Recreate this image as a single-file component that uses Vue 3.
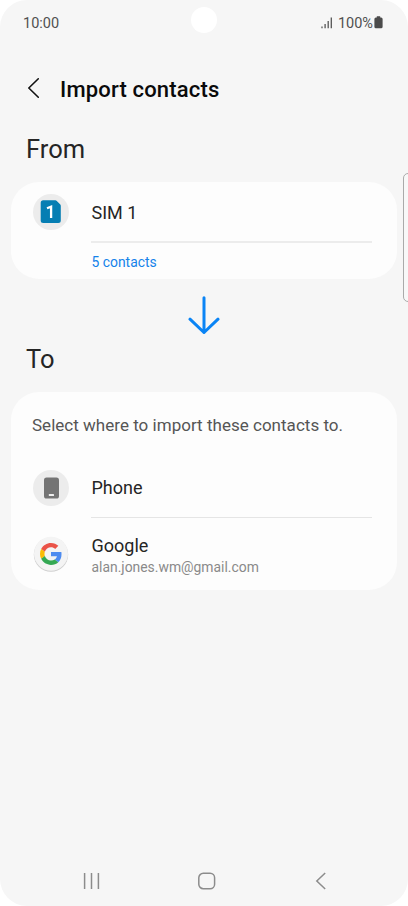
<script setup>
</script>

<template>
  <main class="screen">
    <header class="status">
      <span class="clock">10:00</span>
      <span class="camera"></span>
      <div class="indicators">
        <svg class="signal" width="12" height="12" viewBox="0 0 12 12">
          <path d="M1 9.500V11.200M4.100 7V11.200M7.200 4V11.200M10.300 .6V11.200" />
        </svg>
        <span class="percent">100%</span>
        <svg class="battery" width="9" height="13" viewBox="0 0 9 13">
          <path d="M2.800 .2h3.400v1.200h.9A1.500 1.500 0 0 1 8.600 2.900v7.800a1.500 1.500 0 0 1-1.500 1.500H1.900a1.500 1.500 0 0 1-1.500-1.500V2.900a1.500 1.500 0 0 1 1.500-1.500h.9z" />
        </svg>
      </div>
    </header>

    <div class="titlebar">
      <svg class="back" width="14" height="22" viewBox="0 0 14 22">
        <path d="M11.300 1.800 1.800 11l9.500 9.200" />
      </svg>
      <h1>Import contacts</h1>
    </div>

    <h2 class="from">From</h2>
    <section class="card source">
      <div class="row sim">
        <svg class="icon" width="36" height="36" viewBox="0 0 36 36">
          <circle cx="18" cy="18" r="18" fill="#ececec" />
          <path d="M10.200 6.300h12.300a1.500 1.500 0 0 1 1 .4l3.600 3.500a2.300 2.300 0 0 1 .7 1.600v14.700a2.500 2.500 0 0 1-2.500 2.500H10.200a2.500 2.500 0 0 1-2.500-2.500V8.800a2.500 2.500 0 0 1 2.500-2.500z" fill="#067eb3" />
          <path d="M14 14.300l4.100-1.600v11.200" fill="none" stroke="#fff" stroke-width="2.300" />
        </svg>
        <span class="name">SIM 1</span>
      </div>
      <div class="line"></div>
      <div class="count">5 contacts</div>
    </section>

    <svg class="arrow" width="32" height="39" viewBox="0 0 32 39">
      <path d="M16 1.800V36.500M2 23.200l14 13.300 14-13.300" />
    </svg>

    <h2 class="to">To</h2>
    <section class="card target">
      <p class="hint">Select where to import these contacts to.</p>
      <div class="row phone">
        <svg class="icon" width="36" height="36" viewBox="0 0 36 36">
          <circle cx="18" cy="18" r="18" fill="#ececec" />
          <rect x="11" y="7.600" width="15" height="21" rx="2.600" fill="#747474" />
          <rect x="15.800" y="24" width="5.200" height="2" rx=".5" fill="#eee" />
        </svg>
        <span class="name">Phone</span>
      </div>
      <div class="line"></div>
      <div class="row google">
        <svg class="icon" width="36" height="36" viewBox="0 0 36 36">
          <circle cx="18" cy="18.600" r="17.200" fill="#cfcfcf" />
          <circle cx="18" cy="17.800" r="17" fill="#f4f4f4" />
          <g transform="translate(7 6.900) scale(.458)">
            <path fill="#ea5348" d="M24 9.500c3.540 0 6.710 1.220 9.210 3.600l6.850-6.850C35.900 2.380 30.470 0 24 0 14.620 0 6.510 5.380 2.560 13.220l7.980 6.190C12.430 13.720 17.740 9.500 24 9.500z" />
            <path fill="#4e8cf0" d="M46.980 24.550c0-1.570-.150-3.090-.380-4.550H24v9.020h12.940c-.580 2.960-2.260 5.480-4.780 7.180l7.730 6c4.510-4.180 7.090-10.360 7.090-17.650z" />
            <path fill="#fbbc05" d="M10.530 28.590c-.480-1.450-.760-2.990-.760-4.590s.270-3.140.760-4.590l-7.980-6.190C.920 16.460 0 20.120 0 24c0 3.880.920 7.540 2.560 10.780l7.970-6.190z" />
            <path fill="#34a853" d="M24 48c6.480 0 11.930-2.130 15.890-5.810l-7.730-6c-2.150 1.450-4.920 2.300-8.160 2.300-6.260 0-11.570-4.220-13.470-9.910l-7.980 6.190C6.510 42.620 14.620 48 24 48z" />
          </g>
        </svg>
        <div class="account">
          <span class="name">Google</span>
          <span class="email">alan.jones.wm@gmail.com</span>
        </div>
      </div>
    </section>

    <nav class="navbar">
      <svg width="18" height="18" viewBox="0 0 18 18">
        <path d="M1.600 1v16M8.500 1v16M15.400 1v16" />
      </svg>
      <svg width="18" height="18" viewBox="0 0 18 18">
        <rect x=".8" y="1.300" width="15.800" height="15.400" rx="4.500" />
      </svg>
      <svg width="18" height="18" viewBox="0 0 18 18">
        <path d="M13.200 1 4.800 9l8.400 8" />
      </svg>
    </nav>
    <span class="edge-handle"></span>
  </main>
</template>

<style>
body {
  background: #fff;
}
</style>

<style scoped>
.screen {
  position: relative;
  box-sizing: border-box;
  width: 408px;
  height: 906px;
  overflow: hidden;
  display: flex;
  flex-direction: column;
  border-radius: 27px;
  background: #f6f6f6;
  color: #252525;
  font-family: Roboto, sans-serif;
}
svg {
  display: block;
  flex: none;
}
h1, h2, p {
  margin: 0;
  font-weight: 400;
}
.status {
  height: 46px;
  flex: none;
  box-sizing: border-box;
  padding: 0 24px 6px;
  display: grid;
  grid-template-columns: 1fr 26px 1fr;
  align-items: center;
  font-size: 14.500px;
  color: #505050;
}
.camera {
  width: 26px;
  height: 26px;
  border-radius: 50%;
  background: #fff;
}
.indicators {
  display: flex;
  align-items: center;
  justify-content: flex-end;
  padding-right: 1px;
}
.signal {
  margin-right: 5px;
  fill: none;
  stroke: #555;
  stroke-width: 1.300;
}
.battery {
  margin-left: 1px;
  fill: #4b4b4b;
}
.signal, .battery {
  margin-top: 5px;
}
.clock, .percent {
  margin-top: 6px;
}
.clock {
  margin-left: -1px;
}
.titlebar {
  height: 86px;
  flex: none;
  display: flex;
  align-items: center;
  padding-left: 27px;
}
.back {
  margin-bottom: 2px;
  fill: none;
  stroke: #111;
  stroke-width: 1.600;
  stroke-linecap: round;
  stroke-linejoin: round;
}
h1 {
  margin-left: 19px;
  font-size: 22px;
  font-weight: 500;
  letter-spacing: 0.170px;
  color: #0a0a0a;
}
h2 {
  flex: none;
  height: 34px;
  line-height: 34px;
  padding-left: 26px;
  font-size: 25.500px;
}
.card {
  flex: none;
  box-sizing: border-box;
  margin: 0 11px;
  border-radius: 28px;
  background: #fdfdfd;
}
.source {
  height: 97px;
  margin-top: 16px;
}
.row {
  display: flex;
  align-items: center;
  padding-left: 22px;
  gap: 22.500px;
}
.name {
  font-size: 18px;
  line-height: 22px;
}
.sim {
  height: 59px;
}
.sim .name {
  padding-top: 2px;
}
.line {
  height: 1px;
  margin: 0 25px 0 80px;
  background: #e5e5e5;
}
.source .line {
  height: 2px;
  background: #ececec;
}
.count {
  height: 38px;
  line-height: 38px;
  padding-left: 80.500px;
  font-size: 13.900px;
  color: #1583ea;
}
.arrow {
  margin: 17px 0 0 188px;
  fill: none;
  stroke: #0a84f5;
  stroke-width: 3;
  stroke-linecap: round;
  stroke-linejoin: round;
}
.to {
  margin-top: 7px;
}
.target {
  height: 198px;
  margin-top: 16px;
}
.hint {
  height: 66px;
  line-height: 67px;
  padding-left: 21px;
  font-size: 17px;
  letter-spacing: 0.020px;
  color: #555;
}
.phone {
  height: 59px;
}
.google {
  height: 72px;
}
.account {
  display: flex;
  flex-direction: column;
  padding-top: 5px;
}
.email {
  font-size: 13.900px;
  line-height: 21px;
  color: #8a8a8a;
}
.navbar {
  margin-top: auto;
  height: 50px;
  flex: none;
  padding: 0 78px 0 83px;
  display: flex;
  align-items: center;
  justify-content: space-between;
}
.navbar svg {
  fill: none;
  stroke: #8c8c8c;
  stroke-width: 1.500;
}
.edge-handle {
  position: absolute;
  left: 403px;
  top: 173px;
  width: 12px;
  height: 127px;
  border: 1px solid #aaa;
  border-radius: 5px;
  background: #f8f8f8;
}
</style>
